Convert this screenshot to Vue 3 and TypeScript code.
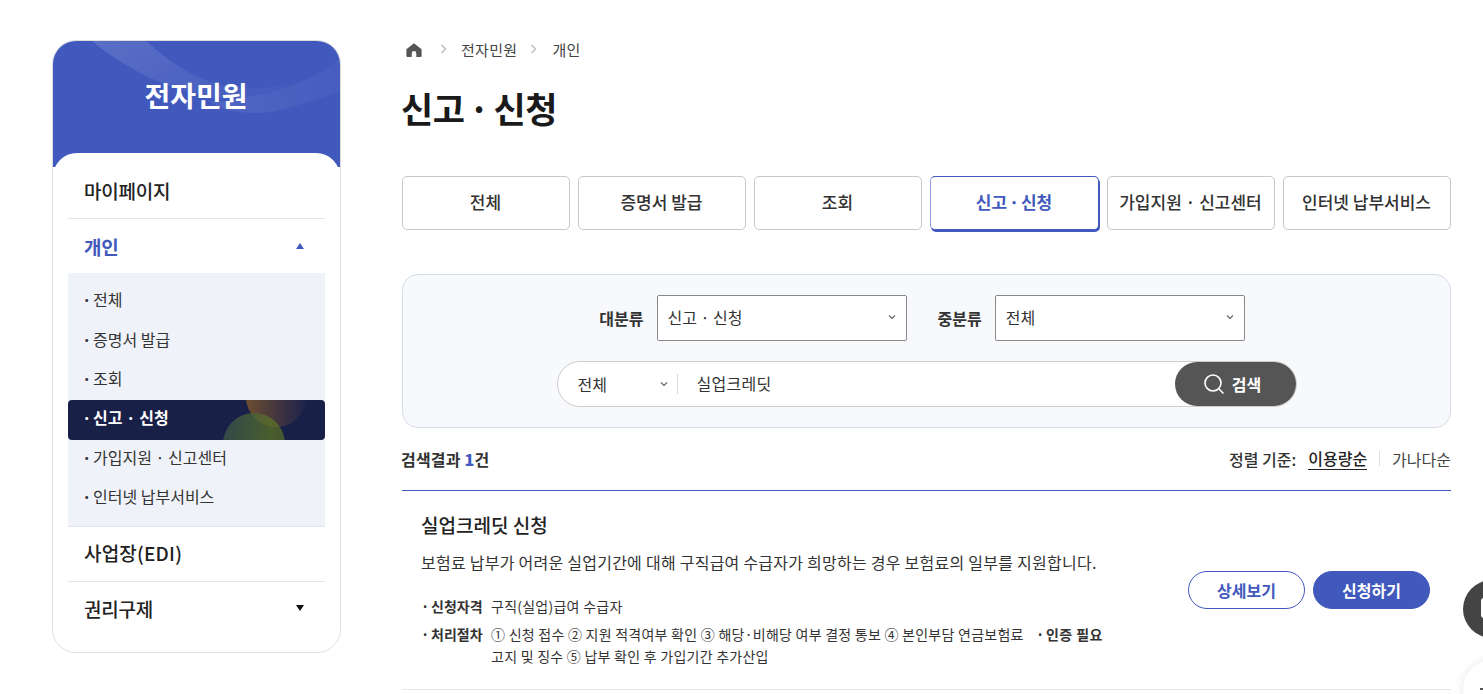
<script setup lang="ts">
const tabs = ['전체', '증명서 발급', '조회', '신고 · 신청', '가입지원 · 신고센터', '인터넷 납부서비스']
const activeTab = '신고 · 신청'
const subItems = ['전체', '증명서 발급', '조회', '신고 · 신청', '가입지원 · 신고센터', '인터넷 납부서비스']
</script>

<template>
  <div class="page">
    <aside class="side">
      <div class="side-head">
        <svg class="side-waves" width="287" height="126" viewBox="0 0 287 126" aria-hidden="true">
          <defs>
            <linearGradient id="waveA" x1="0" y1="0" x2="1" y2="0.4">
              <stop offset="0" stop-color="#fff" stop-opacity=".13" />
              <stop offset="1" stop-color="#fff" stop-opacity=".03" />
            </linearGradient>
            <linearGradient id="waveB" x1="0" y1="0.5" x2="1" y2="0.5">
              <stop offset="0" stop-color="#fff" stop-opacity=".08" />
              <stop offset="1" stop-color="#fff" stop-opacity=".03" />
            </linearGradient>
          </defs>
          <path d="M39 0 C65 22 110 48 160 57 C190 60 218 52 240 42 C210 49 185 49 167 44 C140 37 115 20 93 0 Z" fill="url(#waveA)" />
          <path d="M287 17 L287 51 C254 61 225 72 204 72 C180 72 165 67 154 59 C165 62 175 60 187 57 C225 52 265 38 287 17 Z" fill="url(#waveB)" />
        </svg>
        <h2 class="side-title">전자민원</h2>
      </div>
      <nav class="side-panel">
        <div class="top-item first">마이페이지</div>
        <div class="top-item on">
          <span>개인</span>
          <i class="tri up"></i>
        </div>
        <ul class="sub">
          <li v-for="s in subItems" :key="s" :class="['sub-item', { active: s === activeTab }]">
            <span class="dot">·</span><span>{{ s }}</span>
          </li>
        </ul>
        <div class="top-item edi">사업장(EDI)</div>
        <div class="top-item last">
          <span>권리구제</span>
          <i class="tri down"></i>
        </div>
      </nav>
    </aside>

    <main class="main">
      <div class="crumbs">
        <svg class="home" width="16" height="14" viewBox="0 0 16 14" aria-hidden="true">
          <path d="M8 .3 L15.6 6.2 V13 a1 1 0 0 1-1 1 H10.3 V10.4 a2.3 2.3 0 0 0-4.6 0 V14 H1.4 a1 1 0 0 1-1-1 V6.2 Z" fill="#555" />
        </svg>
        <svg class="sep" width="7" height="10" viewBox="0 0 7 10" aria-hidden="true"><path d="M1.5 1 L5.5 5 L1.5 9" fill="none" stroke="#bbb" stroke-width="1.4" /></svg>
        <span>전자민원</span>
        <svg class="sep" width="7" height="10" viewBox="0 0 7 10" aria-hidden="true"><path d="M1.5 1 L5.5 5 L1.5 9" fill="none" stroke="#bbb" stroke-width="1.4" /></svg>
        <span>개인</span>
      </div>
      <h1 class="title">신고 · 신청</h1>

      <div class="tabs">
        <button v-for="t in tabs" :key="t" :class="['tab', { active: t === activeTab }]">{{ t }}</button>
      </div>

      <section class="search">
        <div class="filters">
          <label class="f-label">대분류</label>
          <div class="select">
            <span>신고 · 신청</span>
            <svg width="8" height="6" viewBox="0 0 8 6" aria-hidden="true"><path d="M1 1.5 L4 4.5 L7 1.5" fill="none" stroke="#666" stroke-width="1.2" /></svg>
          </div>
          <label class="f-label second">중분류</label>
          <div class="select">
            <span>전체</span>
            <svg width="8" height="6" viewBox="0 0 8 6" aria-hidden="true"><path d="M1 1.5 L4 4.5 L7 1.5" fill="none" stroke="#666" stroke-width="1.2" /></svg>
          </div>
        </div>
        <div class="searchbar">
          <div class="s-scope">
            <span>전체</span>
            <svg width="8" height="6" viewBox="0 0 8 6" aria-hidden="true"><path d="M1 1.5 L4 4.5 L7 1.5" fill="none" stroke="#666" stroke-width="1.2" /></svg>
          </div>
          <div class="s-input">실업크레딧</div>
          <button class="s-btn">
            <svg width="22" height="22" viewBox="0 0 22 22" aria-hidden="true">
              <circle cx="10" cy="10" r="8" fill="none" stroke="#fff" stroke-width="1.6" />
              <path d="M15.8 15.8 L20 20" stroke="#fff" stroke-width="1.6" stroke-linecap="round" />
            </svg>
            <span>검색</span>
          </button>
        </div>
      </section>

      <div class="result-bar">
        <div class="count">검색결과 <b>1</b>건</div>
        <div class="sort">
          <span class="sort-label">정렬 기준:</span>
          <span class="sort-on">이용량순</span>
          <i class="sort-sep"></i>
          <span>가나다순</span>
        </div>
      </div>

      <article class="result">
        <div class="r-body">
          <h3 class="r-title">실업크레딧 신청</h3>
          <p class="r-desc">보험료 납부가 어려운 실업기간에 대해 구직급여 수급자가 희망하는 경우 보험료의 일부를 지원합니다.</p>
          <div class="r-row first">
            <span class="r-key"><i>·</i>신청자격</span>
            <span class="r-val">구직(실업)급여 수급자</span>
          </div>
          <div class="r-row">
            <span class="r-key"><i>·</i>처리절차</span>
            <span class="r-val">① 신청 접수 ② 지원 적격여부 확인 ③ 해당·비해당 여부 결정 통보 ④ 본인부담 연금보험료 <span class="r-auth"><i>·</i>인증 필요</span><br />고지 및 징수 ⑤ 납부 확인 후 가입기간 추가산입</span>
          </div>
        </div>
        <div class="r-actions">
          <button class="btn outline">상세보기</button>
          <button class="btn solid">신청하기</button>
        </div>
      </article>
    </main>

    <div class="float dark">
      <svg width="20" height="30" viewBox="0 0 20 30" aria-hidden="true"><rect x="0" y="4" width="20" height="20" rx="3" fill="#fff" /></svg>
    </div>
    <div class="float light"><i class="light-dot"></i></div>
  </div>
</template>

<style>
html, body { margin: 0; background: #fff; overflow: hidden; }
</style>

<style scoped>
* { box-sizing: border-box; }
.page {
  position: relative;
  display: flex;
  gap: 61px;
  width: 1483px;
  height: 694px;
  padding: 40px 32px 0 52px;
  overflow: hidden;
  font-family: "Noto Sans CJK KR", "Noto Sans", sans-serif;
  color: #222;
}
.side {
  flex: 0 0 289px;
  height: 613px;
  border: 1px solid #ddd;
  border-radius: 24px;
  overflow: hidden;
  background: #fff;
}
.side-head {
  position: relative;
  height: 126px;
  background: #4159bd;
  display: flex;
  justify-content: center;
  padding-top: 34px;
}
.side-waves { position: absolute; left: 0; top: 0; }
.side-title {
  position: relative;
  margin: 0 0 0 -1px;
  font-size: 28px;
  line-height: 40px;
  font-weight: 700;
  color: #fff;
}
.side-panel {
  position: relative;
  margin-top: -14px;
  padding: 10px 15px 0;
  height: 500px;
  background: #fff;
  border-radius: 24px 24px 0 0;
}
.top-item {
  display: flex;
  align-items: center;
  justify-content: space-between;
  height: 55px;
  padding: 0 21px 0 16px;
  font-size: 19px;
  letter-spacing: -0.2px;
  font-weight: 500;
  color: #222;
  border-bottom: 1px solid #e3e5ea;
}
.top-item.first { height: 56px; }
.top-item.on { height: 54px; color: #4159bd; border-bottom: 0; font-weight: 700; }
.top-item.edi { border-top: 1px solid #e3e5ea; height: 56px; letter-spacing: .2px; padding-bottom: 2px; }
.top-item.last { border-bottom: 0; padding-bottom: 2px; }
.tri { width: 0; height: 0; border-left: 4.5px solid transparent; border-right: 4.5px solid transparent; }
.tri.up { border-bottom: 6px solid #4159bd; }
.tri.down { border-top: 6px solid #111; }
.sub {
  list-style: none;
  margin: 0;
  padding: 9px 0 7.6px;
  background: #eff2f8;
}
.sub-item {
  position: relative;
  display: flex;
  align-items: center;
  height: 39.4px;
  padding: 0 0 5px 14px;
  font-size: 16px;
  color: #333;
  overflow: hidden;
}
.dot { width: 11px; font-weight: 700; }
.sub-item.active {
  background: #182048;
  color: #fff;
  font-weight: 700;
  border-radius: 4px;
}
.sub-item.active::before {
  content: "";
  position: absolute;
  left: 178px;
  top: -33px;
  width: 61px;
  height: 60px;
  border-radius: 50%;
  background: linear-gradient(90deg, rgba(125, 85, 45, .85) 0%, rgba(70, 55, 65, .6) 70%, rgba(40, 40, 80, .3) 100%);
}
.sub-item.active::after {
  content: "";
  position: absolute;
  left: 155px;
  top: 13px;
  width: 62px;
  height: 62px;
  border-radius: 50%;
  background: linear-gradient(100deg, rgba(50, 75, 75, .9) 0%, rgba(95, 120, 35, .7) 70%, rgba(80, 100, 40, .75) 100%);
}
.sub-item.active span { position: relative; z-index: 1; }

.main { flex: 1 1 auto; min-width: 0; }
.crumbs {
  display: flex;
  align-items: center;
  height: 20px;
  padding-bottom: 2px;
  font-size: 15px;
  letter-spacing: .3px;
  color: #444;
}
.home { margin: 2px 0 0 4px; }
.sep { margin: 0 14px 0 18px; }
.sep ~ .sep { margin: 0 15px 0 13px; }
.title {
  margin: 23px 0 0 -1px;
  font-size: 35px;
  line-height: 50px;
  font-weight: 700;
  color: #1a1a1a;
  letter-spacing: -0.5px;
  word-spacing: -3px;
}
.tabs {
  display: flex;
  gap: 8px;
  margin-top: 43px;
}
.tab {
  flex: 0 0 168px;
  height: 54px;
  padding: 0 1px 3px 0;
  background: #fff;
  border: 1px solid #c8c8c8;
  border-radius: 5px;
  font: 500 17px "Noto Sans CJK KR", "Noto Sans", sans-serif;
  color: #333;
  white-space: nowrap;
}
.tab.active {
  flex-basis: 169px;
  border-color: #4159bd #4159bd #4159bd #8d9cdc;
  box-shadow: 1px 2px 0 #4159bd;
  color: #4159bd;
  font-weight: 700;
  word-spacing: -2px;
}
.search {
  margin-top: 44px;
  height: 154px;
  padding-top: 20px;
  background: #f8f9fc;
  border: 1px solid #d6dcec;
  border-radius: 16px;
}
.filters {
  display: flex;
  align-items: center;
  justify-content: center;
  padding-right: 9px;
}
.f-label { font-size: 16px; font-weight: 700; color: #333; margin-right: 13px; padding-bottom: 1px; }
.f-label.second { margin-left: 31px; }
.select {
  display: flex;
  align-items: center;
  justify-content: space-between;
  width: 250px;
  height: 46px;
  padding: 0 10px 2px;
  background: #fff;
  border: 1px solid #888;
  border-radius: 2px;
  font-size: 16px;
  color: #333;
}
.searchbar {
  display: flex;
  align-items: center;
  width: 740px;
  height: 46px;
  margin: 20px auto 0;
  background: #fff;
  border: 1px solid #ccc;
  border-radius: 23px;
  font-size: 16px;
  color: #333;
}
.s-scope {
  display: flex;
  align-items: center;
  justify-content: space-between;
  width: 120px;
  height: 20px;
  padding: 0 9px 1px 20px;
  border-right: 1px solid #ddd;
}
.s-input { flex: 1; padding: 0 0 2px 19px; letter-spacing: .3px; }
.s-btn {
  display: flex;
  align-items: center;
  justify-content: center;
  gap: 7px;
  width: 121px;
  height: 44px;
  padding: 0 6px 0 0;
  border: 0;
  border-radius: 22px;
  background: #555;
  color: #fff;
  font: 700 16px "Noto Sans CJK KR", "Noto Sans", sans-serif;
}
.result-bar {
  display: flex;
  align-items: center;
  justify-content: space-between;
  height: 63px;
  border-bottom: 1px solid #4159bd;
  padding-bottom: 1px;
}
.count { font-size: 16px; letter-spacing: .2px; font-weight: 700; color: #333; margin-left: -1px; }
.count b { color: #4159bd; }
.sort { display: flex; align-items: center; font-size: 16px; color: #444; }
.sort-label { font-weight: 500; color: #333; margin-right: 12px; }
.sort-on { font-weight: 500; color: #222; border-bottom: 1px solid #222; line-height: 22px; }
.sort-sep { width: 1px; height: 15px; background: #ddd; margin: 0 12px; }
.result {
  display: flex;
  align-items: flex-start;
  justify-content: space-between;
  height: 199px;
  padding: 20px 21px 0 19px;
  border-bottom: 1px solid #e5e5e5;
}
.r-body { width: 700px; }
.r-title { margin: 0; font-size: 19px; line-height: 28px; font-weight: 500; color: #222; }
.r-desc { margin: 11px 0 0; font-size: 16px; letter-spacing: .25px; line-height: 24px; color: #333; white-space: nowrap; }
.r-row { display: flex; margin-top: 6px; font-size: 14px; line-height: 22px; color: #333; }
.r-row.first { margin-top: 21px; }
.r-key { flex: 0 0 70px; font-weight: 700; white-space: nowrap; }
.r-key i, .r-auth i { font-style: normal; display: inline-block; width: 10px; }
.r-val { white-space: nowrap; letter-spacing: .25px; }
.r-auth { font-weight: 700; margin-left: 9px; letter-spacing: .4px; }
.r-actions { display: flex; gap: 8px; margin-top: 60px; }
.btn {
  width: 117px;
  height: 38px;
  padding: 0;
  border-radius: 19px;
  font: 700 16px "Noto Sans CJK KR", "Noto Sans", sans-serif;
}
.btn.outline { background: #fff; border: 1px solid #4159bd; color: #4159bd; }
.btn.solid { background: #4159bd; border: 1px solid #4159bd; color: #fff; }
.float {
  position: absolute;
  left: 1463px;
  width: 58px;
  height: 58px;
  border-radius: 50%;
}
.float.dark { top: 580px; background: #444; padding: 14px 0 0 18px; }
.float.light { top: 660px; background: #fff; box-shadow: 0 0 10px rgba(0,0,0,.1); }
.light-dot { position: absolute; left: 17px; top: 28px; width: 3px; height: 2px; background: #555; }
</style>
